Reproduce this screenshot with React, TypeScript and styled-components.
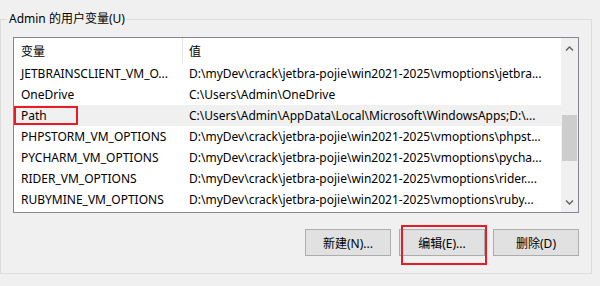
import React from 'react';
import styled, { createGlobalStyle } from 'styled-components';

const GlobalStyle = createGlobalStyle`
  html, body {
    margin: 0;
    padding: 0;
    background: #f0f0f0;
  }
  body {
    font-family: "Noto Sans", "Noto Sans CJK SC", sans-serif;
    font-size: 12px;
    color: #000;
  }
`;

type Variable = { name: string; value: string };

// texts as the list view shows them, already shortened by the column width
const variables: Variable[] = [
  { name: 'JETBRAINSCLIENT_VM_O...', value: 'D:\\myDev\\crack\\jetbra-pojie\\win2021-2025\\vmoptions\\jetbra...' },
  { name: 'OneDrive', value: 'C:\\Users\\Admin\\OneDrive' },
  { name: 'Path', value: 'C:\\Users\\Admin\\AppData\\Local\\Microsoft\\WindowsApps;D:\\...' },
  { name: 'PHPSTORM_VM_OPTIONS', value: 'D:\\myDev\\crack\\jetbra-pojie\\win2021-2025\\vmoptions\\phpst...' },
  { name: 'PYCHARM_VM_OPTIONS', value: 'D:\\myDev\\crack\\jetbra-pojie\\win2021-2025\\vmoptions\\pycha...' },
  { name: 'RIDER_VM_OPTIONS', value: 'D:\\myDev\\crack\\jetbra-pojie\\win2021-2025\\vmoptions\\rider....' },
  { name: 'RUBYMINE_VM_OPTIONS', value: 'D:\\myDev\\crack\\jetbra-pojie\\win2021-2025\\vmoptions\\ruby...' },
];

const Page = styled.div`
  width: 600px;
  height: 286px;
  padding-top: 11px;
  box-sizing: border-box;
`;

const Group = styled.fieldset`
  margin: 0;
  width: 592px;
  height: 263px;
  box-sizing: border-box;
  border: 1px solid #dcdcdc;
  padding: 10px 12px 0 12px;
  min-width: 0;
`;

const Legend = styled.legend`
  margin-left: -6px;
  padding: 0 2px;
  line-height: 16px;
  font-size: 12px;
`;

const ListBox = styled.div`
  width: 566px;
  height: 176px;
  box-sizing: border-box;
  border: 1px solid #828790;
  background: #fff;
  display: flex;
`;

const Table = styled.div`
  flex: 1;
  display: flex;
  flex-direction: column;
  overflow: hidden;
`;

const HeaderRow = styled.div`
  display: grid;
  grid-template-columns: 168px 1fr;
  height: 25px;
`;

const HeaderCell = styled.div<{ $divider?: boolean }>`
  display: flex;
  align-items: center;
  border-left: ${(p) => (p.$divider ? '1px solid #e5e5e5' : 'none')};
  padding-left: ${(p) => (p.$divider ? '6px' : '7px')};
`;

const Row = styled.div<{ $active?: boolean }>`
  display: grid;
  grid-template-columns: 168px 1fr;
  height: 21px;
  background: ${(p) => (p.$active ? '#f0f0f0' : '#fff')};
`;

const Cell = styled.div`
  position: relative;
  display: flex;
  align-items: center;
  padding: 0 4px 0 7px;
  min-width: 0;
`;

const CellText = styled.span`
  white-space: nowrap;
`;

const Mark = styled.span`
  position: absolute;
  left: 0;
  top: 1px;
  width: 64px;
  height: 19px;
  box-sizing: border-box;
  border: 2px solid #e81c24;
`;

const ScrollBar = styled.div`
  width: 17px;
  background: #f0f0f0;
  display: flex;
  flex-direction: column;
  align-items: center;
`;

const Arrow = styled.div`
  height: 21px;
  width: 17px;
  display: flex;
  align-items: center;
  justify-content: center;
`;

const Track = styled.div`
  flex: 1;
  width: 15px;
  display: flex;
  flex-direction: column;
`;

const Thumb = styled.div`
  margin-top: 56px;
  height: 46px;
  background: #cdcdcd;
`;

const ButtonRow = styled.div`
  display: flex;
  justify-content: flex-end;
  gap: 8px;
  margin-top: 16px;
  width: 566px;
`;

const Button = styled.button`
  position: relative;
  width: 86px;
  height: 27px;
  padding: 0;
  box-sizing: border-box;
  border: 1px solid #adadad;
  background: #e1e1e1;
  font-family: "Noto Sans", "Noto Sans CJK SC", sans-serif;
  font-size: 12px;
  color: #000;
`;

const ButtonMark = styled.span`
  position: absolute;
  left: 1px;
  top: -5px;
  width: 86px;
  height: 40px;
  box-sizing: border-box;
  border: 2px solid #e81c24;
`;

const Chevron = ({ down }: { down?: boolean }) => (
  <svg width="9" height="6" viewBox="0 0 9 6">
    <path
      d={down ? 'M1 1.5 L4.5 5 L8 1.5' : 'M1 4.5 L4.5 1 L8 4.5'}
      fill="none"
      stroke="#606060"
      strokeWidth="1.4"
    />
  </svg>
);

export default function App() {
  return (
    <Page>
      <GlobalStyle />
      <Group>
        <Legend>Admin 的用户变量(U)</Legend>
        <ListBox>
          <Table>
            <HeaderRow>
              <HeaderCell>变量</HeaderCell>
              <HeaderCell $divider>值</HeaderCell>
            </HeaderRow>
            {variables.map((v) => (
              <Row key={v.name} $active={v.name === 'Path'}>
                <Cell>
                  <CellText>{v.name}</CellText>
                  {v.name === 'Path' && <Mark />}
                </Cell>
                <Cell>
                  <CellText>{v.value}</CellText>
                </Cell>
              </Row>
            ))}
          </Table>
          <ScrollBar>
            <Arrow><Chevron /></Arrow>
            <Track><Thumb /></Track>
            <Arrow><Chevron down /></Arrow>
          </ScrollBar>
        </ListBox>
        <ButtonRow>
          <Button>新建(N)...</Button>
          <Button>
            编辑(E)...
            <ButtonMark />
          </Button>
          <Button>删除(D)</Button>
        </ButtonRow>
      </Group>
    </Page>
  );
}
